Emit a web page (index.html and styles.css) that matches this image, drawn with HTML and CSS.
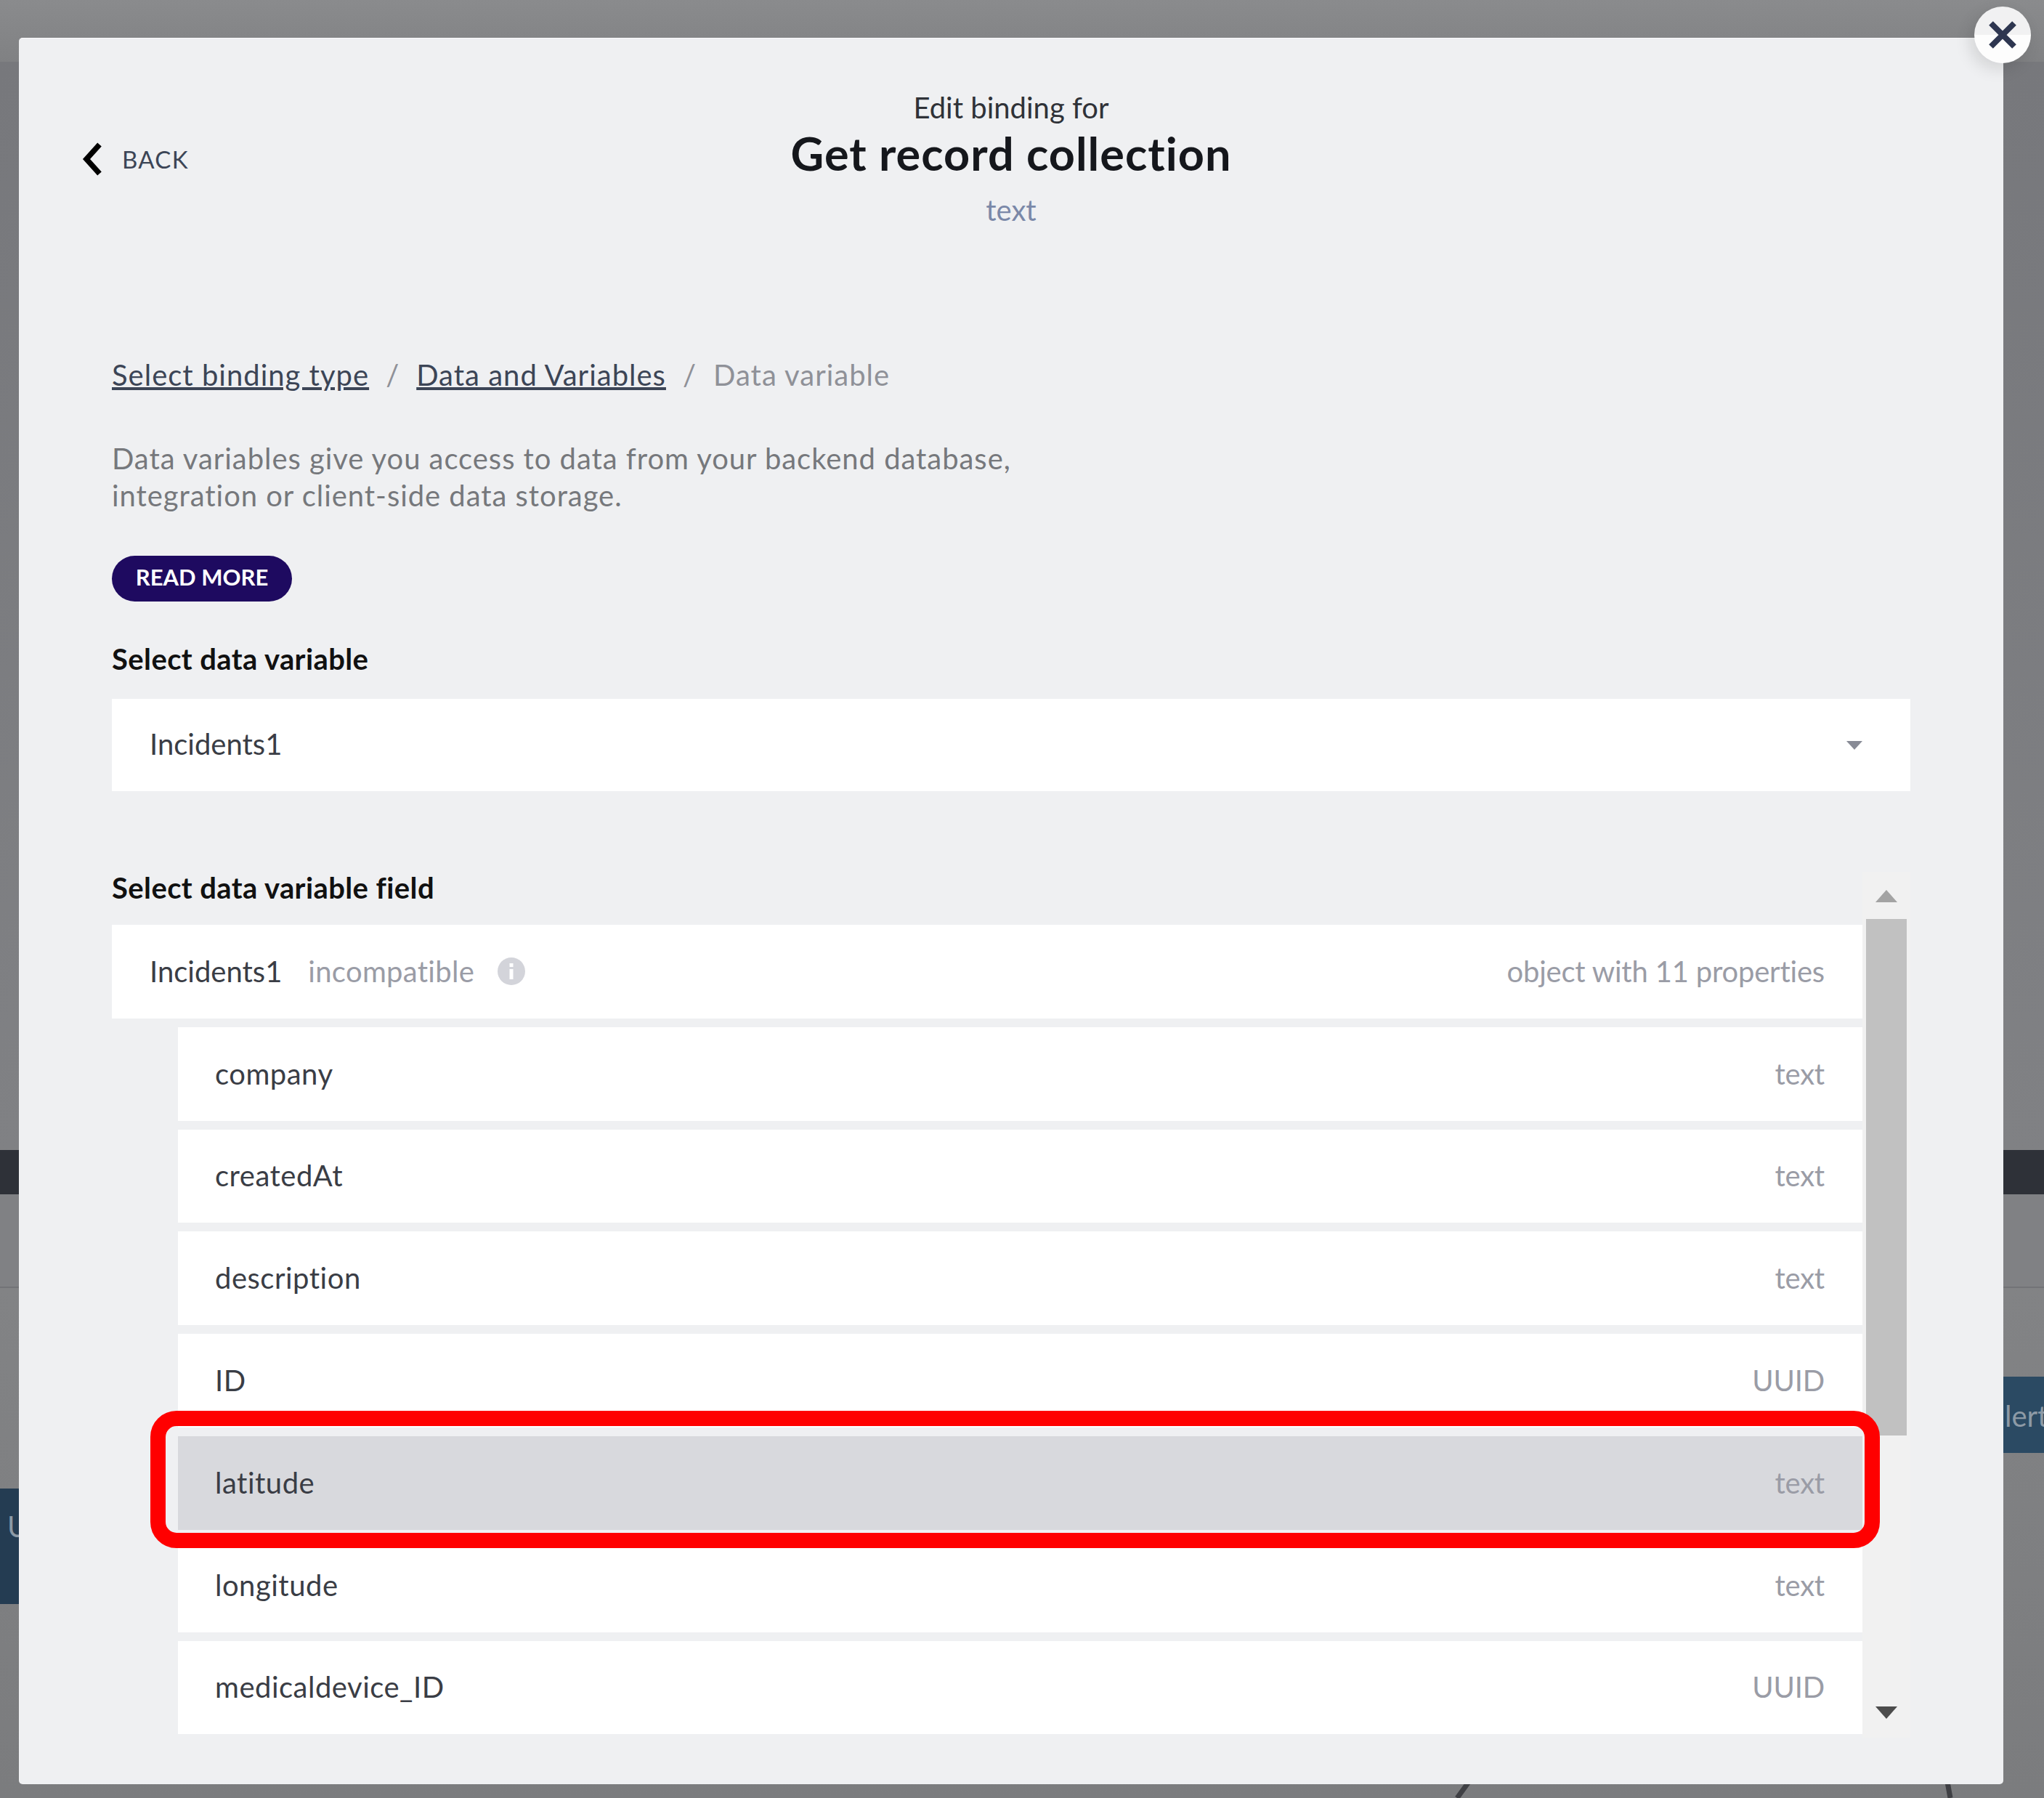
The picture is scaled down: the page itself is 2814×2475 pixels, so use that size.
FILE: index.html
```html
<!DOCTYPE html>
<html lang="en">
<head>
  <meta charset="UTF-8">
  <title>Edit binding</title>
  <link rel="stylesheet" href="styles.css">
</head>
<body>

  <!-- editor behind the dialog, only the edges show -->
  <div class="backdrop">
    <div class="top-bar"></div>
    <div class="pane"></div>
    <div class="dark-bar"></div>
    <div class="tool-bar"></div>
    <div class="canvas">
      <div class="node node-left">U</div>
      <div class="node node-right">lert</div>
      <svg class="wires" width="2814" height="702" viewBox="0 0 2814 702" fill="none" stroke="#3f4044" stroke-width="7">
        <path d="M2022 680 L2006 702" />
        <path d="M2681 680 L2685 702" />
      </svg>
    </div>
  </div>

  <div class="modal">
    <button class="close" type="button" aria-label="Close">
      <svg width="40" height="40" viewBox="0 0 40 40" fill="none" stroke="#2e3650" stroke-width="8">
        <path d="M4 4 L36 36 M36 4 L4 36" />
      </svg>
    </button>

    <header class="head">
      <a class="back" href="#">
        <svg width="30" height="46" viewBox="0 0 30 46" fill="none" stroke="#000" stroke-width="7.5">
          <path d="M25 3 L7 23 L25 43" />
        </svg>
        <span>BACK</span>
      </a>
      <div class="head-title">
        <div class="head-sub">Edit binding for</div>
        <h1>Get record collection</h1>
        <div class="head-type">text</div>
      </div>
    </header>

    <nav class="crumbs">
      <a href="#">Select binding type</a>
      <span class="sep">/</span>
      <a href="#">Data and Variables</a>
      <span class="sep">/</span>
      <span class="current">Data variable</span>
    </nav>

    <p class="intro">Data variables give you access to data from your backend database,<br>integration or client-side data storage.</p>

    <button class="read-more" type="button">READ MORE</button>

    <div class="label">Select data variable</div>
    <div class="select">
      <span>Incidents1</span>
      <i class="caret"></i>
    </div>

    <div class="fields">
      <div class="field-list">
        <div class="label field-label">Select data variable field</div>

        <div class="row">
          <div class="row-name">
            <span>Incidents1</span>
            <span class="incompatible">incompatible</span>
            <svg width="38" height="38" viewBox="0 0 38 38">
              <circle cx="19" cy="19" r="19" fill="#d3d4da" />
              <rect x="16.5" y="16" width="5" height="14" fill="#fff" />
              <rect x="16.5" y="8" width="5" height="5" fill="#fff" />
            </svg>
          </div>
          <span class="row-type">object with 11 properties</span>
        </div>

        <div class="row child"><span>company</span><span class="row-type">text</span></div>
        <div class="row child"><span>createdAt</span><span class="row-type">text</span></div>
        <div class="row child"><span>description</span><span class="row-type">text</span></div>
        <div class="row child"><span>ID</span><span class="row-type">UUID</span></div>
        <div class="row child selected"><span>latitude</span><span class="row-type">text</span></div>
        <div class="row child"><span>longitude</span><span class="row-type">text</span></div>
        <div class="row child"><span>medicaldevice_ID</span><span class="row-type">UUID</span></div>

        <div class="callout"></div>
      </div>

      <div class="scrollbar">
        <i class="arrow-up"></i>
        <div class="thumb"></div>
        <i class="arrow-down"></i>
      </div>
    </div>
  </div>

</body>
</html>
```

FILE: styles.css
```css
* {
  box-sizing: border-box;
  margin: 0;
  padding: 0;
}
html, body {
  height: 100%;
  font-family: 'Lato', 'Open Sans', sans-serif;
  font-variant-ligatures: none;
}
body {
  position: relative;
  height: 2475px;
  overflow: hidden;
  padding: 52px 56px 19px 26px;
  background-color: #7d7e81;
  font-size: 40px;
  color: #3a3d45;
}
a {
  color: inherit;
}

/* backdrop */
.backdrop {
  position: absolute;
  top: 0;
  left: 0;
  width: 100%;
  height: 100%;
  overflow: hidden;
  display: flex;
  flex-direction: column;
}
.top-bar {
  height: 85px;
  background: linear-gradient(#8a8b8d, #808183);
}
.pane {
  height: 1498px;
  background: linear-gradient(#77787c, #808184);
}
.dark-bar {
  height: 61px;
  background-color: #2e3138;
}
.tool-bar {
  height: 129px;
  background-color: #808184;
  border-bottom: 2px solid #727377;
}
.canvas {
  position: relative;
  flex: 1;
  background: linear-gradient(#828385, #7b7c7e);
}
.node {
  position: absolute;
  font-size: 40px;
  line-height: 48px;
  color: #8d9aa6;
  overflow: hidden;
}
.node-left {
  left: 0;
  top: 276px;
  width: 26px;
  height: 159px;
  padding: 28px 0 0 10px;
  background-color: #243c52;
}
.node-right {
  left: 2758px;
  top: 122px;
  width: 56px;
  height: 105px;
  padding: 30px 0 0 2px;
  background-color: #2b4a63;
}
.wires {
  position: absolute;
  top: 0;
  left: 0;
}

/* dialog */
.modal {
  position: relative;
  width: 2732px;
  height: 2404px;
  padding: 71px 128px 0;
  background-color: #eff0f2;
  border-radius: 5px;
  border-top: 1px solid #fafafb;
}
.close {
  position: absolute;
  top: -44px;
  right: -38px;
  width: 78px;
  height: 78px;
  display: flex;
  align-items: center;
  justify-content: center;
  border: none;
  border-radius: 50%;
  background: linear-gradient(#f1f1f2 50%, #fdfdfd 50%);
  box-shadow: -6px 8px 22px rgba(0, 0, 0, 0.12);
  z-index: 2;
}

.head {
  display: grid;
  grid-template-columns: 1fr auto 1fr;
  align-items: center;
  margin: 0 -128px;
}
.back {
  display: flex;
  align-items: center;
  gap: 26px;
  margin-left: 86px;
  font-size: 33px;
  letter-spacing: 1.3px;
  color: #3c4556;
  text-decoration: none;
}
.head-title {
  grid-column: 2;
  text-align: center;
}
.head-sub {
  height: 50px;
  line-height: 48px;
  color: #2f3238;
}
h1 {
  height: 78px;
  line-height: 74px;
  font-size: 63px;
  font-weight: 700;
  letter-spacing: 1px;
  color: #15171c;
}
.head-type {
  height: 50px;
  line-height: 50px;
  margin-top: 12px;
  color: #7a88a8;
}

.crumbs {
  display: flex;
  gap: 23px;
  height: 50px;
  line-height: 48px;
  margin-top: 178px;
  letter-spacing: 1px;
  color: #8f9198;
}
.crumbs a {
  color: #3c4556;
}
.intro {
  margin-top: 64px;
  line-height: 51px;
  letter-spacing: 0.95px;
  color: #76787c;
}
.read-more {
  display: block;
  width: 248px;
  height: 63px;
  margin-top: 57px;
  padding-bottom: 6px;
  border: none;
  border-radius: 32px;
  background-color: #1e0a60;
  color: white;
  font-family: inherit;
  font-size: 31px;
  font-weight: 700;
}

.label {
  height: 50px;
  line-height: 48px;
  margin-top: 55px;
  letter-spacing: 0.4px;
  font-weight: 700;
  color: #111;
}
.select {
  display: flex;
  align-items: center;
  justify-content: space-between;
  height: 127px;
  margin-top: 29px;
  padding: 0 66px 3px 52px;
  background-color: white;
}
.caret {
  margin-top: 3px;
  border-top: 12px solid #888b96;
  border-left: 11px solid transparent;
  border-right: 11px solid transparent;
}

.fields {
  display: flex;
  height: 1192px;
  margin-top: 111px;
}
.field-list {
  position: relative;
  width: 2410px;
}
.field-label {
  height: 44px;
  line-height: 44px;
  margin: 0 0 29px;
}
.row {
  display: flex;
  align-items: center;
  justify-content: space-between;
  height: 128.8px;
  margin-bottom: 12px;
  padding: 0 52px 1px;
  background-color: white;
  letter-spacing: 0.5px;
}
.row-name {
  display: flex;
  align-items: center;
  letter-spacing: 0;
}
.incompatible {
  margin: 0 32px 0 36px;
  letter-spacing: 0.3px;
  color: #9a9ca6;
}
.row-type {
  letter-spacing: -0.2px;
  color: #9a9ca6;
}
.child {
  margin-left: 91px;
  padding-left: 51px;
}
.selected {
  background-color: #d8d9dd;
}
.callout {
  position: absolute;
  left: 53px;
  top: 742px;
  width: 2381px;
  height: 189px;
  border: 21px solid #ff0000;
  border-radius: 36px;
}

.scrollbar {
  display: flex;
  flex-direction: column;
  align-items: center;
  width: 66px;
  background-color: #f1f1f1;
}
.arrow-up {
  margin-top: 25px;
  border-bottom: 17px solid #a3a3a3;
  border-left: 15px solid transparent;
  border-right: 15px solid transparent;
}
.thumb {
  width: 56px;
  height: 711px;
  margin-top: 23px;
  background-color: #c1c1c1;
}
.arrow-down {
  margin-top: auto;
  margin-bottom: 26px;
  border-top: 17px solid #4c4c4c;
  border-left: 15px solid transparent;
  border-right: 15px solid transparent;
}
```
